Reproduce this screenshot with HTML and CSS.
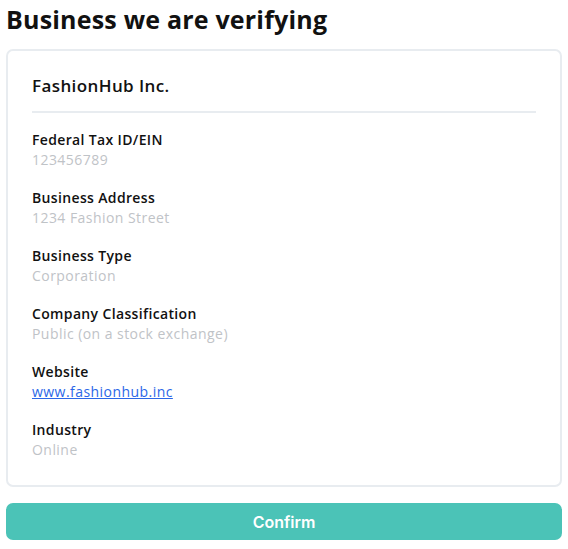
FILE: index.html
```html
<!DOCTYPE html>
<html>
<head>
<meta charset="utf-8">
<link rel="stylesheet" href="styles.css">
</head>
<body>
<div class="page">
  <h1 class="title">Business we are verifying</h1>
  <div class="card">
    <div class="card-head">FashionHub Inc.</div>
    <div class="fields">
      <div class="field"><div class="label">Federal Tax ID/EIN</div><div class="value">123456789</div></div>
      <div class="field"><div class="label">Business Address</div><div class="value">1234 Fashion Street</div></div>
      <div class="field"><div class="label">Business Type</div><div class="value">Corporation</div></div>
      <div class="field"><div class="label">Company Classification</div><div class="value">Public (on a stock exchange)</div></div>
      <div class="field"><div class="label">Website</div><a class="value link" href="#">www.fashionhub.inc</a></div>
      <div class="field"><div class="label">Industry</div><div class="value">Online</div></div>
    </div>
  </div>
  <button class="confirm">Confirm</button>
</div>
</body>
</html>
```
FILE: styles.css
```css
html, body { margin: 0; padding: 0; background: #ffffff; }
body { font-family: "Open Sans", "DejaVu Sans", sans-serif; color: #111; }
.page { padding: 4px 6px 0 6px; display: flex; flex-direction: column; }
.title { margin: 0; font-size: 25px; line-height: 30px; font-weight: 700; color: #111; letter-spacing: 0.2px; }
.card { margin-top: 15px; border: 2px solid #e8ecf0; border-radius: 7px; padding: 24px 24px 25px 24px; }
.card-head { font-size: 17px; line-height: 22px; font-weight: 600; padding-bottom: 14px; border-bottom: 2px solid #e8ecf0; letter-spacing: 0.4px; }
.fields { display: flex; flex-direction: column; gap: 18px; margin-top: 17px; }
.field { display: flex; flex-direction: column; align-items: flex-start; }
.label { font-size: 14px; line-height: 20px; font-weight: 600; color: #111; letter-spacing: 0.35px; }
.value { font-size: 14px; line-height: 20px; color: #bfc3c7; letter-spacing: 0.45px; }
.link { color: #2b67e8; text-decoration: underline; }
.confirm { margin-top: 16px; height: 37px; border: none; border-radius: 7px; background: #4bc3b7; color: #fff; font-family: "Inter", sans-serif; font-size: 16px; font-weight: 600; }
```
